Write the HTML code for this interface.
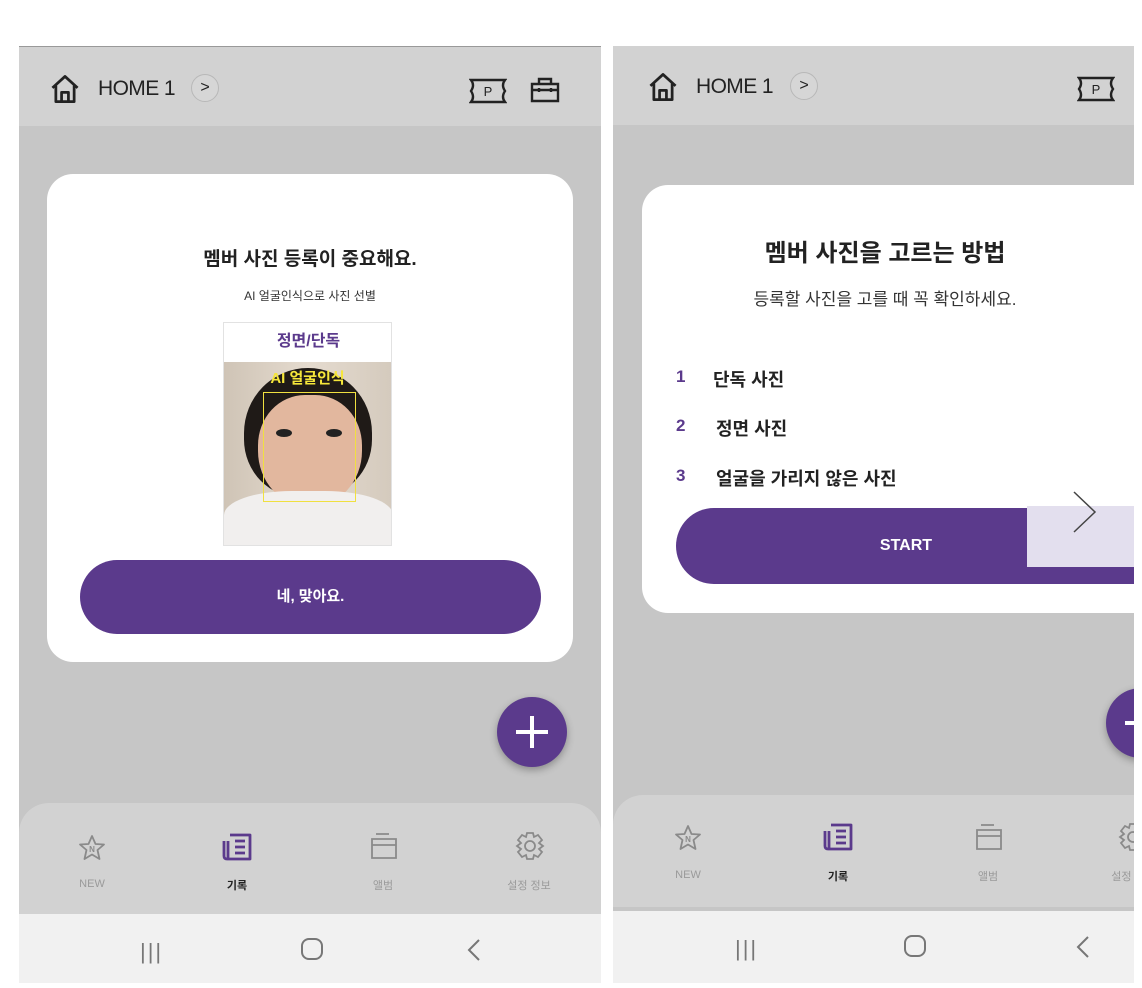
<!DOCTYPE html>
<html><head><meta charset="utf-8">
<style>
*{margin:0;padding:0;box-sizing:border-box}
body{width:1142px;height:988px;background:#fff;position:relative;overflow:hidden;font-family:"Liberation Sans","Noto Sans CJK KR",sans-serif;color:#222}
.a{position:absolute}
.phone{position:absolute;top:46px;height:937px;background:#c6c6c6;overflow:hidden}
.hdr{position:absolute;left:0;top:0;right:0;height:79px;background:#d2d2d2}
.nav{position:absolute;left:0;right:0;height:112px;background:#d2d2d2;border-radius:30px 30px 0 0}
.sys{position:absolute;left:0;right:0;bottom:0;height:69px;background:#f1f1f1}
.lbl{position:absolute;font-size:11px;color:#9a9a9a;transform:translateX(-50%);white-space:nowrap}
.card{position:absolute;background:#fff;border-radius:26px}
.btn{position:absolute;background:#5b3a8c;border-radius:38px;color:#fff;font-weight:bold;text-align:center}
.fab{position:absolute;width:70px;height:70px;border-radius:50%;background:#5b3a8c;box-shadow:0 3px 8px rgba(0,0,0,.3)}
.home{font-size:21px;letter-spacing:-0.6px;color:#222}
.chev{width:28px;height:28px;border-radius:50%;border:1px solid #b8b8b8;background:#d6d6d6;font-size:16px;text-align:center;line-height:26px;color:#222}
</style></head><body>

<!-- LEFT PHONE -->
<div class="phone" style="left:19px;width:582px;border-top:1px solid #999">
  <div class="hdr"></div>
  <svg class="a" style="left:30px;top:26px" width="32" height="32" viewBox="0 0 28 28" fill="none" stroke="#222" stroke-width="2.4" stroke-linejoin="round"><path d="M3 13 L14 3 L25 13 M6 11 V25 H22 V11 M11 25 V17 H17 V25"/></svg>
  <div class="a home" style="left:79px;top:30px">HOME 1</div>
  <div class="a chev" style="left:172px;top:27px">&gt;</div>
  <svg class="a" style="left:450px;top:31px" width="38" height="26" viewBox="0 0 38 26" fill="none" stroke="#222" stroke-width="2.4"><path d="M2 2 H36 Q32 7 36 13 Q32 19 36 24 H2 Q6 19 2 13 Q6 7 2 2Z"/><text x="19" y="18" font-size="13" fill="#222" stroke="none" text-anchor="middle" font-family="Liberation Sans">P</text></svg>
  <svg class="a" style="left:511px;top:30px" width="30" height="26" viewBox="0 0 30 26" fill="none" stroke="#222" stroke-width="2.4"><path d="M2 7 H28 V24 H2Z M9 7 V2 H21 V7 M2 13 H28 M9 11 V15 M21 11 V15"/></svg>

  <div class="card" style="left:28px;top:127px;width:526px;height:488px">
    <div class="a" style="left:0;right:0;top:70px;text-align:center;font-size:19px;font-weight:bold;color:#222">멤버 사진 등록이 중요해요.</div>
    <div class="a" style="left:0;right:0;top:113px;text-align:center;font-size:12px;color:#333">AI 얼굴인식으로 사진 선별</div>
    <div class="a" style="left:176px;top:148px;width:169px;height:224px;border:1px solid #e2e2e2;overflow:hidden;background:#d8cdbf">
      <div class="a" style="left:0;top:0;width:169px;height:39px;background:#fff;text-align:center;font-size:16px;font-weight:bold;color:#5b3a8c;line-height:37px">정면/단독</div>
      <div class="a" style="left:0;top:39px;width:169px;height:185px;background:linear-gradient(90deg,#cfc4b6,#e5dbcf 50%,#d4cabd)"></div>
      <div class="a" style="left:20px;top:45px;width:128px;height:130px;border-radius:50% 50% 45% 45%;background:#1f1a17"></div>
      <div class="a" style="left:34px;top:72px;width:104px;height:112px;border-radius:45% 45% 50% 50%;background:#e2b79e"></div>
      <div class="a" style="left:52px;top:106px;width:16px;height:8px;border-radius:50%;background:#222"></div>
      <div class="a" style="left:102px;top:106px;width:16px;height:8px;border-radius:50%;background:#222"></div>
      <div class="a" style="left:0;top:168px;width:169px;height:60px;border-radius:40% 40% 0 0;background:#f1efee"></div>
      <div class="a" style="left:39px;top:69px;width:93px;height:110px;border:1.5px solid #f0e040"></div>
      <div class="a" style="left:0;right:0;top:44px;text-align:center;font-size:15px;font-weight:bold;color:#f5e63a">AI 얼굴인식</div>
    </div>
    <div class="btn" style="left:33px;top:386px;width:461px;height:74px;line-height:74px;font-size:15px">네, 맞아요.</div>
  </div>

  <div class="fab" style="left:478px;top:650px"><div class="a" style="left:19px;top:33px;width:32px;height:4px;background:#fff"></div><div class="a" style="left:33px;top:19px;width:4px;height:32px;background:#fff"></div></div>

  <div class="nav" style="top:756px">
    <svg class="a" style="left:58px;top:30px" width="30" height="30" viewBox="0 0 30 30" fill="none" stroke="#8a8a8a" stroke-width="1.8" stroke-linejoin="round"><path d="M15 3 L18.5 11 L27 11.5 L20.5 17 L22.5 26 L15 21.5 L7.5 26 L9.5 17 L3 11.5 L11.5 11Z"/><text x="15" y="19" font-size="8" fill="#8a8a8a" stroke="none" text-anchor="middle" font-weight="bold">N</text></svg>
    <svg class="a" style="left:202px;top:28px" width="32" height="32" viewBox="0 0 32 32" fill="none" stroke="#5b3a8c" stroke-width="2.8" stroke-linejoin="round"><path d="M9 4 H29 V28 H6 Q3 28 3 25 V10 M7 10 V28 M14 10 H24 M14 16 H24 M14 22 H24"/></svg>
    <svg class="a" style="left:350px;top:28px" width="30" height="30" viewBox="0 0 30 30" fill="none" stroke="#8a8a8a" stroke-width="1.8"><path d="M3 8 H27 V27 H3Z M3 14 H27 M7 3 H20"/></svg>
    <svg class="a" style="left:495px;top:27px" width="32" height="32" viewBox="0 0 32 32" fill="none" stroke="#8a8a8a" stroke-width="1.8"><circle cx="16" cy="16" r="5"/><path d="M13 3 H19 L20 7 L24 5 L28 10 L25 13 L29 16 L25 19 L28 22 L24 27 L20 25 L19 29 H13 L12 25 L8 27 L4 22 L7 19 L3 16 L7 13 L4 10 L8 5 L12 7Z"/></svg>
    <div class="lbl" style="left:73px;top:75px">NEW</div>
    <div class="lbl" style="left:218px;top:74px;color:#222;font-weight:bold">기록</div>
    <div class="lbl" style="left:364px;top:74px">앨범</div>
    <div class="lbl" style="left:510px;top:74px">설정 정보</div>
  </div>
  <div class="sys">
    <div class="a" style="left:121px;top:25px;font-size:22px;color:#777;letter-spacing:2px">|||</div>
    <div class="a" style="left:282px;top:24px;width:22px;height:22px;border:2px solid #777;border-radius:8px"></div>
    <svg class="a" style="left:448px;top:24px" width="14" height="24" viewBox="0 0 14 24" fill="none" stroke="#777" stroke-width="2"><path d="M12 2 L2 12 L12 22"/></svg>
  </div>
</div>

<!-- RIGHT PHONE -->
<div class="phone" style="left:613px;width:521px">
  <div class="hdr"></div>
  <svg class="a" style="left:34px;top:25px" width="32" height="32" viewBox="0 0 28 28" fill="none" stroke="#222" stroke-width="2.4" stroke-linejoin="round"><path d="M3 13 L14 3 L25 13 M6 11 V25 H22 V11 M11 25 V17 H17 V25"/></svg>
  <div class="a home" style="left:83px;top:29px">HOME 1</div>
  <div class="a chev" style="left:177px;top:26px">&gt;</div>
  <svg class="a" style="left:464px;top:30px" width="38" height="26" viewBox="0 0 38 26" fill="none" stroke="#222" stroke-width="2.4"><path d="M2 2 H36 Q32 7 36 13 Q32 19 36 24 H2 Q6 19 2 13 Q6 7 2 2Z"/><text x="19" y="18" font-size="13" fill="#222" stroke="none" text-anchor="middle" font-family="Liberation Sans">P</text></svg>

  <div class="card" style="left:29px;top:139px;width:540px;height:428px">
    <div class="a" style="left:0;width:486px;top:48px;text-align:center;font-size:24px;font-weight:bold;color:#222">멤버 사진을 고르는 방법</div>
    <div class="a" style="left:0;width:486px;top:100px;text-align:center;font-size:17px;color:#333">등록할 사진을 고를 때 꼭 확인하세요.</div>
    <div class="a" style="left:34px;top:182px;font-size:17px;font-weight:bold;color:#5b3a8c">1</div>
    <div class="a" style="left:71px;top:181px;font-size:18px;font-weight:bold;color:#222">단독 사진</div>
    <div class="a" style="left:34px;top:231px;font-size:17px;font-weight:bold;color:#5b3a8c">2</div>
    <div class="a" style="left:74px;top:230px;font-size:18px;font-weight:bold;color:#222">정면 사진</div>
    <div class="a" style="left:34px;top:281px;font-size:17px;font-weight:bold;color:#5b3a8c">3</div>
    <div class="a" style="left:74px;top:280px;font-size:18px;font-weight:bold;color:#222">얼굴을 가리지 않은 사진</div>
    <div class="btn" style="left:34px;top:323px;width:500px;height:76px;line-height:76px;font-size:16px;text-indent:-40px">START</div>
    <div class="a" style="left:385px;top:275px;width:107px;height:107px;background:linear-gradient(#fff 0 46px,#e3dfee 46px)"></div>
    <svg class="a" style="left:428px;top:305px" width="30" height="44" viewBox="0 0 30 44" fill="none" stroke="#444" stroke-width="1.5"><path d="M4 2 L25 22 L4 42"/></svg>
  </div>

  <div class="fab" style="left:493px;top:642px"><div class="a" style="left:19px;top:33px;width:32px;height:4px;background:#fff"></div></div>

  <div class="nav" style="top:749px;border-radius:30px 0 0 0">
    <svg class="a" style="left:60px;top:28px" width="30" height="30" viewBox="0 0 30 30" fill="none" stroke="#8a8a8a" stroke-width="1.8" stroke-linejoin="round"><path d="M15 3 L18.5 11 L27 11.5 L20.5 17 L22.5 26 L15 21.5 L7.5 26 L9.5 17 L3 11.5 L11.5 11Z"/><text x="15" y="19" font-size="8" fill="#8a8a8a" stroke="none" text-anchor="middle" font-weight="bold">N</text></svg>
    <svg class="a" style="left:209px;top:26px" width="32" height="32" viewBox="0 0 32 32" fill="none" stroke="#5b3a8c" stroke-width="2.8" stroke-linejoin="round"><path d="M9 4 H29 V28 H6 Q3 28 3 25 V10 M7 10 V28 M14 10 H24 M14 16 H24 M14 22 H24"/></svg>
    <svg class="a" style="left:361px;top:27px" width="30" height="30" viewBox="0 0 30 30" fill="none" stroke="#8a8a8a" stroke-width="1.8"><path d="M3 8 H27 V27 H3Z M3 14 H27 M7 3 H20"/></svg>
    <svg class="a" style="left:504px;top:26px" width="32" height="32" viewBox="0 0 32 32" fill="none" stroke="#8a8a8a" stroke-width="1.8"><circle cx="16" cy="16" r="5"/><path d="M13 3 H19 L20 7 L24 5 L28 10 L25 13 L29 16 L25 19 L28 22 L24 27 L20 25 L19 29 H13 L12 25 L8 27 L4 22 L7 19 L3 16 L7 13 L4 10 L8 5 L12 7Z"/></svg>
    <div class="lbl" style="left:75px;top:74px">NEW</div>
    <div class="lbl" style="left:225px;top:73px;color:#222;font-weight:bold">기록</div>
    <div class="lbl" style="left:375px;top:73px">앨범</div>
    <div class="lbl" style="left:520px;top:73px">설정 정보</div>
  </div>
  <div class="sys" style="height:72px">
    <div class="a" style="left:122px;top:25px;font-size:22px;color:#777;letter-spacing:2px">|||</div>
    <div class="a" style="left:291px;top:24px;width:22px;height:22px;border:2px solid #777;border-radius:8px"></div>
    <svg class="a" style="left:463px;top:24px" width="14" height="24" viewBox="0 0 14 24" fill="none" stroke="#777" stroke-width="2"><path d="M12 2 L2 12 L12 22"/></svg>
  </div>
</div>
</body></html>
